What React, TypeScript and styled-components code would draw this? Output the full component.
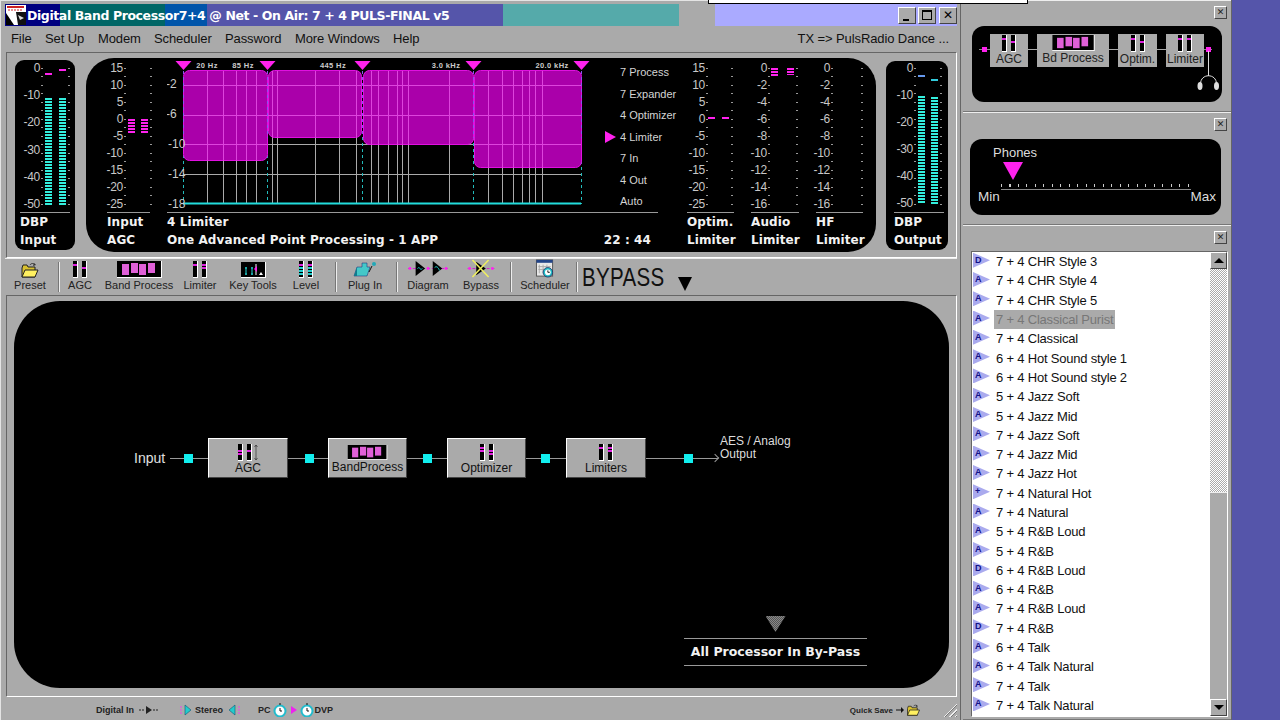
import React from 'react'
import styled, { createGlobalStyle, css } from 'styled-components'

const gray = '#aaaaaa'
const raised = css`
  border-top: 1px solid #fff;
  border-left: 1px solid #fff;
  border-right: 1px solid #444;
  border-bottom: 1px solid #444;
`
const sunken = css`
  border-top: 1px solid #666;
  border-left: 1px solid #666;
  border-right: 1px solid #fff;
  border-bottom: 1px solid #fff;
`
const displayFont = css`
  font-family: 'DejaVu Sans', sans-serif;
  font-weight: 700;
  color: #f2f2f2;
`

const GlobalStyle = createGlobalStyle`
  html, body {
    margin: 0;
    padding: 0;
    background: #5555aa;
    overflow: hidden;
  }
  * { box-sizing: border-box; }
`

type Seg = { top: number; h: number; color: string; striped?: boolean }
type MeterProps = { scale: string[]; scaleW: number; gap: number; lead?: number; bars: Seg[][] }

const inputScale = ['0', '-10', '-20', '-30', '-40', '-50']
const agcScale = ['15', '10', '5', '0', '-5', '-10', '-15', '-20', '-25']
const limitScale = ['0', '-2', '-4', '-6', '-8', '-10', '-12', '-14', '-16']
const mag = '#ff22ee'
const cyan = '#33eedd'

function Meter({ scale, scaleW, gap, lead = 2, bars }: MeterProps) {
  return (
    <MeterBody>
      <Scale $w={scaleW}>
        {scale.map((s) => (
          <span key={s}>{s}</span>
        ))}
      </Scale>
      <Ticks />
      <Tracks $gap={gap} $lead={lead}>
        {bars.map((segs, i) => {
          let end = 0
          return (
            <Track key={i}>
              {segs.map((s, j) => {
                const offset = s.top - end
                end = s.top + s.h
                return <Segment key={j} $top={offset} $h={s.h} $color={s.color} $striped={s.striped} />
              })}
            </Track>
          )
        })}
      </Tracks>
      <Ticks />
    </MeterBody>
  )
}

function Pair({ fills, arrow }: { fills: string[][]; arrow?: boolean }) {
  return (
    <svg width={arrow ? 20 : 14} height="17" viewBox={arrow ? '0 0 20 17' : '0 0 14 17'}>
      {[0, 9].map((x, i) => (
        <g key={x}>
          <rect x={x} y="0" width="5" height="17" fill="#000" />
          <rect x={x + 4} y="0" width="1" height="17" fill="#fff" />
          <rect x={x} y="16" width="5" height="1" fill="#fff" />
          {fills[i].map((f, k) => (
            <rect key={k} x={x} y={3 + k * 3} width="4" height="2" fill={f} />
          ))}
        </g>
      ))}
      {arrow && <path d="M18 1 V16 M16.5 3 L18 1 L19.5 3 M16.5 14 L18 16 L19.5 14" stroke="#333" strokeWidth="0.7" fill="none" />}
    </svg>
  )
}

function BandIcon({ width = 45, height = 17 }: { width?: number; height?: number }) {
  return (
    <svg width={width} height={height} viewBox="0 0 45 17">
      <rect width="45" height="17" fill="#fff" />
      <rect width="44" height="16" fill="#000" />
      {[5, 14, 22, 31].map((x, i) => (
        <rect key={x} x={x} y={i % 2 ? 2 : 3} width="7" height={i % 2 ? 10 : 11} fill="#e060d8" />
      ))}
    </svg>
  )
}

function Folder({ width = 18, height = 16 }: { width?: number; height?: number }) {
  return (
    <svg width={width} height={height} viewBox="0 0 18 16">
      <path d="M1 6 L1 15 L14 15 L14 5 L7 5 L6 3 L2 3 Z" fill="#d8c030" stroke="#222" />
      <path d="M1 15 L4 8 L17 8 L14 15 Z" fill="#fff060" stroke="#222" />
      <path d="M9 3 C10 1 13 1 14 3" fill="none" stroke="#333" />
      <path d="M13 1 L15 3 L12 4 Z" fill="#333" />
    </svg>
  )
}

function KeyToolsIcon() {
  return (
    <svg width="25" height="16" viewBox="0 0 25 16">
      <rect width="25" height="16" fill="#fff" />
      <rect width="24" height="15" fill="#000" />
      <path d="M5 5 V13 M4 6 H6 M4 12 H6" stroke="#22dddd" />
      <path d="M11 5 V13 M10 6 H12 M10 12 H12" stroke="#22dddd" />
      <path d="M15 2 V13" stroke="#fff" />
      <path d="M13 7 L16 4 L16 10 Z" fill="#ff22ee" />
      <path d="M18 13 H22 L20 10 Z" fill="#fff" />
    </svg>
  )
}

function PlugIcon() {
  return (
    <svg width="26" height="17" viewBox="0 0 26 17">
      <path d="M5 6 L10 6 L10 2 L15 2 L15 6 L18 6 L15 15 L2 15 Z" fill="#44c8c8" stroke="#127" strokeWidth="0.5" />
      <path d="M2 15 L5 6 L5 15 Z" fill="#117c8c" />
      <circle cx="22" cy="3" r="2" fill="#22a8b8" />
      <path d="M17 11 L20 5" stroke="#111" />
    </svg>
  )
}

function FlowIcon() {
  return (
    <svg width="44" height="20" viewBox="0 0 44 20">
      <path d="M1 10 H43" stroke="#cc22cc" strokeDasharray="3 2" />
      <circle cx="3" cy="10" r="1.5" fill="#ff22ee" />
      <circle cx="22" cy="10" r="1.5" fill="#ff22ee" />
      <circle cx="41" cy="10" r="1.5" fill="#ff22ee" />
      <path d="M9 2 L19 10 L9 18 Z" fill="#000" />
      <path d="M11 10 C13 7 14 13 16 10" stroke="#22dddd" fill="none" />
      <path d="M27 2 L37 10 L27 18 Z" fill="#000" />
      <path d="M29 9 C31 7 33 9 34 12" stroke="#22dddd" fill="none" />
    </svg>
  )
}

function BypassIcon() {
  return (
    <svg width="30" height="20" viewBox="0 0 30 20">
      <path d="M1 10 H29" stroke="#cc22cc" strokeDasharray="3 2" />
      <circle cx="3" cy="10" r="1.5" fill="#ff22ee" />
      <circle cx="27" cy="10" r="1.5" fill="#ff22ee" />
      <path d="M10 3 L20 10 L10 17 Z" fill="#000" />
      <path d="M6 1 L23 19 M23 1 L6 19" stroke="#f0f060" strokeWidth="1.6" />
    </svg>
  )
}

function SchedulerIcon() {
  return (
    <svg width="20" height="20" viewBox="0 0 20 20">
      <rect x="1" y="1" width="17" height="17" fill="#e8e8e8" stroke="#555" />
      <rect x="1" y="1" width="17" height="3" fill="#224488" />
      <path d="M4 6 V15 M8 6 V15 M12 6 V15 M3 8 H16 M3 11 H16" stroke="#aaa" />
      <circle cx="13" cy="14" r="5" fill="#22c0c8" stroke="#115" strokeWidth="0.7" />
      <circle cx="13" cy="14" r="3" fill="#fff" />
      <path d="M13 12 V14 H15" stroke="#111" fill="none" />
    </svg>
  )
}

function AppIcon() {
  return (
    <svg width="20" height="20" viewBox="0 0 20 20">
      <rect width="20" height="20" fill="#fff" />
      <rect x="1" y="1" width="17" height="2" fill="#c22" />
      <path d="M2 5 H16" stroke="#c22" strokeDasharray="2 1" />
      <path d="M0 8 L8 20 L0 20 Z" fill="#000" />
      <path d="M10 7 H20 V20 H12 Z" fill="#111" />
      <path d="M12 10 L18 13 L14 15 Z" fill="#ddd" />
    </svg>
  )
}

function RouteTail() {
  return (
    <TailSvg width="20" height="63" viewBox="0 0 20 63">
      <path d="M0 15.5 H8" stroke="#888" />
      <rect x="2" y="13" width="5" height="5" fill="#ff22ee" />
      <path d="M4.5 17 V42" stroke="#ddd" />
      <path d="M-3.5 50 C-3.5 39 12.5 39 12.5 50" fill="none" stroke="#ddd" />
      <ellipse cx="-4" cy="52" rx="2.5" ry="4" fill="#ddd" />
      <ellipse cx="12.5" cy="52" rx="2.5" ry="4" fill="#ddd" />
    </TailSvg>
  )
}

const bands = [
  { x: 183, w: 84, b: 160, v: [207, 223, 236, 246, 256] },
  { x: 268, w: 93, b: 137, v: [272, 277, 315, 339, 356] },
  { x: 363, w: 110, b: 144, v: [371, 378, 388, 397, 402, 408, 449] },
  { x: 474, w: 107, b: 167, v: [488, 502, 513, 522, 529, 535, 542] },
]
const hLines = [84, 114, 143, 173]
const markers = [183, 267, 362, 473, 581]
const freqs: [string, number][] = [
  ['20 Hz', 207],
  ['85 Hz', 243],
  ['445 Hz', 333],
  ['3.0 kHz', 446],
  ['20.0 kHz', 552],
]
const dbLabels: [string, number, number][] = [
  ['-2', 166, 87],
  ['-6', 166, 117],
  ['-10', 168, 147],
  ['-14', 168, 177],
  ['-18', 168, 207],
]

function BandChart() {
  return (
    <ChartSvg width="423" height="151" viewBox="167 58 423 151">
      {hLines.map((y) => (
        <line key={y} x1="183" x2="581" y1={y + 0.5} y2={y + 0.5} stroke="#aaa" />
      ))}
      {bands.map((b) =>
        b.v.map((x) => <line key={x} x1={x + 0.5} x2={x + 0.5} y1="70" y2="202" stroke="#aaa" />),
      )}
      {markers.map((x) => (
        <line key={x} x1={x + 0.5} x2={x + 0.5} y1="70" y2="203" stroke="#22bbbb" strokeDasharray="3 3" />
      ))}
      <rect x="183" y="201.5" width="398" height="2" fill="#22dddd" />
      {bands.map((b) => (
        <g key={b.x}>
          <rect x={b.x + 0.5} y="69.5" width={b.w} height={b.b - 70} rx="6" fill="#aa00aa" stroke="#e010e0" />
          {hLines
            .filter((y) => y < b.b - 3)
            .map((y) => (
              <line key={y} x1={b.x} x2={b.x + b.w} y1={y + 0.5} y2={y + 0.5} stroke="#dd44dd" />
            ))}
          {b.v.map((x) => (
            <line key={x} x1={x + 0.5} x2={x + 0.5} y1="70" y2={b.b} stroke="#dd44dd" />
          ))}
        </g>
      ))}
      {markers.map((x) => (
        <g key={x}>
          <line x1={x + 0.5} x2={x + 0.5} y1="70" y2="137" stroke="#8855ee" strokeDasharray="3 3" />
          <path d={`M${x - 7.5} 60 H${x + 8.5} L${x + 0.5} 69 Z`} fill="#ff22ee" />
        </g>
      ))}
      {freqs.map(([t, x]) => (
        <text key={t} x={x} y="67" textAnchor="middle" fontFamily="'Liberation Sans', sans-serif" fontWeight="700" fontSize="7.5" fill="#ccc" letterSpacing="0.4">
          {t}
        </text>
      ))}
      {dbLabels.map(([t, x, y]) => (
        <text key={t} x={x} y={y} fontFamily="'Liberation Sans', sans-serif" fontSize="12" fill="#ccc">
          {t}
        </text>
      ))}
    </ChartSvg>
  )
}

const chain = ['7 Process', '7 Expander', '4 Optimizer', '4 Limiter', '7 In', '4 Out', 'Auto']

const presets: [string, string][] = [
  ['D', '7 + 4 CHR Style 3'],
  ['A', '7 + 4 CHR Style 4'],
  ['A', '7 + 4 CHR Style 5'],
  ['A', '7 + 4 Classical Purist'],
  ['A', '7 + 4 Classical'],
  ['A', '6 + 4 Hot Sound style 1'],
  ['A', '6 + 4 Hot Sound style 2'],
  ['A', '5 + 4 Jazz Soft'],
  ['A', '5 + 4 Jazz Mid'],
  ['A', '7 + 4 Jazz Soft'],
  ['A', '7 + 4 Jazz Mid'],
  ['A', '7 + 4 Jazz Hot'],
  ['+', '7 + 4 Natural Hot'],
  ['A', '7 + 4 Natural'],
  ['A', '5 + 4 R&B Loud'],
  ['A', '5 + 4 R&B'],
  ['D', '6 + 4 R&B Loud'],
  ['A', '6 + 4 R&B'],
  ['A', '7 + 4 R&B Loud'],
  ['D', '7 + 4 R&B'],
  ['A', '6 + 4 Talk'],
  ['A', '6 + 4 Talk Natural'],
  ['A', '7 + 4 Talk'],
  ['A', '7 + 4 Talk Natural'],
]

const m = '#dd22dd'
const k = '#000'
const t = '#22cccc'

export default function App() {
  return (
    <>
      <GlobalStyle />
      <Page>
        <TopSliver />
        <MainWindow>
          <TitleBar>
            <AppIcon />
            <TitleText>Digital Band Processor7+4 @ Net - On Air: 7 + 4 PULS-FINAL v5</TitleText>
            <WindowButtons>
              <WinButton>
                <MinGlyph />
              </WinButton>
              <WinButton>
                <MaxGlyph />
              </WinButton>
              <CloseWinButton>✕</CloseWinButton>
            </WindowButtons>
          </TitleBar>

          <MenuBar>
            <MenuItem $w={34}>File</MenuItem>
            <MenuItem $w={53}>Set Up</MenuItem>
            <MenuItem $w={56}>Modem</MenuItem>
            <MenuItem $w={71}>Scheduler</MenuItem>
            <MenuItem $w={70}>Password</MenuItem>
            <MenuItem $w={98}>More Windows</MenuItem>
            <MenuItem $w={40}>Help</MenuItem>
            <TxLabel>TX =&gt; PulsRadio Dance ...</TxLabel>
          </MenuBar>

          <MeterFrame>
            <SidePanel $w={60} $h={190} $top={2} $left={5}>
              <Column $w={50}>
                <Meter
                  scale={inputScale}
                  scaleW={20}
                  gap={7}
                  bars={[
                    [
                      { top: 11, h: 2, color: mag },
                      { top: 36, h: 107, color: cyan, striped: true },
                    ],
                    [
                      { top: 7, h: 2, color: mag },
                      { top: 36, h: 107, color: cyan, striped: true },
                    ],
                  ]}
                />
                <Rule />
                <Caption>DBP</Caption>
                <Caption>Input</Caption>
              </Column>
            </SidePanel>

            <CenterPanel>
              <Column $w={43}>
                <Meter
                  scale={agcScale}
                  scaleW={16}
                  gap={6}
                  lead={2}
                  bars={[
                    [{ top: 57, h: 14, color: mag, striped: true }],
                    [{ top: 57, h: 14, color: mag, striped: true }],
                  ]}
                />
                <Rule />
                <Caption>Input</Caption>
                <Caption>AGC</Caption>
              </Column>

              <Column $w={491}>
                <ChartRow>
                  <BandChart />
                  <ChainList>
                    {chain.map((c) => (
                      <ChainRow key={c}>
                        {c === '4 Limiter' && <ChainMarker />}
                        {c}
                      </ChainRow>
                    ))}
                  </ChainList>
                </ChartRow>
                <Rule />
                <Caption>4 Limiter</Caption>
                <CaptionRow>
                  <Caption>One Advanced Point Processing - 1 APP</Caption>
                  <Clock>22 : 44</Clock>
                </CaptionRow>
              </Column>

              <Column $w={47} $left={12}>
                <Meter
                  scale={agcScale}
                  scaleW={18}
                  gap={7}
                  lead={0}
                  bars={[[{ top: 55, h: 2, color: mag }], [{ top: 55, h: 2, color: mag }]]}
                />
                <Rule />
                <Caption>Optim.</Caption>
                <Caption>Limiter</Caption>
              </Column>

              <Column $w={48}>
                <Meter
                  scale={limitScale}
                  scaleW={16}
                  gap={9}
                  lead={1}
                  bars={[
                    [{ top: 6, h: 9, color: mag, striped: true }],
                    [{ top: 6, h: 7, color: mag, striped: true }],
                  ]}
                />
                <Rule />
                <Caption>Audio</Caption>
                <Caption>Limiter</Caption>
              </Column>

              <Column $w={47}>
                <Meter scale={limitScale} scaleW={14} gap={11} lead={1} bars={[[], []]} />
                <Rule />
                <Caption>HF</Caption>
                <Caption>Limiter</Caption>
              </Column>
            </CenterPanel>

            <SidePanel $w={62} $h={189} $top={1} $left={8}>
              <Column $w={50}>
                <Meter
                  scale={inputScale}
                  scaleW={19}
                  gap={6}
                  bars={[
                    [
                      { top: 13, h: 2, color: '#6699ee' },
                      { top: 34, h: 108, color: cyan, striped: true },
                    ],
                    [
                      { top: 17, h: 2, color: '#33ccdd' },
                      { top: 35, h: 107, color: cyan, striped: true },
                    ],
                  ]}
                />
                <Rule />
                <Caption>DBP</Caption>
                <Caption>Output</Caption>
              </Column>
            </SidePanel>
          </MeterFrame>

          <Toolbar>
            <ToolButton $w={46}>
              <Folder />
              <ToolLabel>Preset</ToolLabel>
            </ToolButton>
            <ToolSep $l={5} $r={5} />
            <ToolButton $w={30}>
              <Pair fills={[[m, k, k], [k, m, k]]} />
              <ToolLabel>AGC</ToolLabel>
            </ToolButton>
            <ToolButton $w={88}>
              <BandIcon />
              <ToolLabel>Band Process</ToolLabel>
            </ToolButton>
            <ToolButton $w={34}>
              <Pair fills={[[m, k, k], [m, m, k]]} />
              <ToolLabel>Limiter</ToolLabel>
            </ToolButton>
            <ToolButton $w={72}>
              <KeyToolsIcon />
              <ToolLabel>Key Tools</ToolLabel>
            </ToolButton>
            <ToolButton $w={34}>
              <Pair fills={[[m, t, t, t], [m, t, t, t]]} />
              <ToolLabel>Level</ToolLabel>
            </ToolButton>
            <ToolSep $l={12} $r={12} />
            <ToolButton $w={32}>
              <PlugIcon />
              <ToolLabel>Plug In</ToolLabel>
            </ToolButton>
            <ToolSep $l={15} $r={6} />
            <ToolButton $w={48}>
              <FlowIcon />
              <ToolLabel>Diagram</ToolLabel>
            </ToolButton>
            <ToolButton $w={58}>
              <BypassIcon />
              <ToolLabel>Bypass</ToolLabel>
            </ToolButton>
            <ToolSep $l={0} $r={2} />
            <ToolButton $w={62}>
              <SchedulerIcon />
              <ToolLabel>Scheduler</ToolLabel>
            </ToolButton>
            <ToolSep $l={0} $r={4} />
            <BypassTitle>BYPASS</BypassTitle>
            <BypassArrow />
          </Toolbar>

          <DisplayFrame>
            <Display>
              <DiagramRow>
                <InputLabel>Input</InputLabel>
                <Wire $w={38}>
                  <Node $shift={-1} />
                </Wire>
                <Block $w={80}>
                  <Pair fills={[[k, m, m], [k, m, k]]} arrow />
                  <BlockLabel>AGC</BlockLabel>
                </Block>
                <Wire $w={40}>
                  <Node $shift={1} />
                </Wire>
                <Block $w={79}>
                  <BandIcon width={45} height={15} />
                  <BlockLabel>BandProcess</BlockLabel>
                </Block>
                <Wire $w={40}>
                  <Node />
                </Wire>
                <Block $w={79}>
                  <Pair fills={[[m, m, k], [k, m, m]]} />
                  <BlockLabel>Optimizer</BlockLabel>
                </Block>
                <Wire $w={40}>
                  <Node $shift={-1} />
                </Wire>
                <Block $w={80}>
                  <Pair fills={[[m, k, k], [m, m, k]]} />
                  <BlockLabel>Limiters</BlockLabel>
                </Block>
                <Wire $w={72}>
                  <Node $shift={6} />
                  <WireArrow />
                </Wire>
                <OutputLabel>
                  AES / Analog
                  <br />
                  Output
                </OutputLabel>
              </DiagramRow>
              <Notice>
                <NoticeArrow />
                <NoticeText>All Processor In By-Pass</NoticeText>
              </Notice>
            </Display>
          </DisplayFrame>

          <StatusBar>
            <StatusText $left={91}>Digital In</StatusText>
            <StatusGlyph $w={20} $left={5}>
              <svg width="20" height="8" viewBox="0 0 20 8">
                <path d="M0 4 H5 M14 4 H19" stroke="#222" strokeDasharray="2 1" />
                <path d="M7 0 L13 4 L7 8 Z" fill="#222" />
              </svg>
            </StatusGlyph>
            <StatusGlyph $w={12} $left={21}>
              <svg width="12" height="12" viewBox="0 0 12 12">
                <path d="M5 1 L11 6 L5 11 Z" fill="#22cccc" stroke="#157" strokeWidth="0.6" />
                <path d="M1 2 V10" stroke="#ee44ee" strokeDasharray="2 1" />
              </svg>
            </StatusGlyph>
            <StatusText $left={3}>Stereo</StatusText>
            <StatusGlyph $w={12} $left={5}>
              <svg width="12" height="12" viewBox="0 0 12 12">
                <path d="M7 1 L1 6 L7 11 Z" fill="#22cccc" stroke="#157" strokeWidth="0.6" />
                <path d="M11 2 V10" stroke="#ee44ee" strokeDasharray="2 1" />
              </svg>
            </StatusGlyph>
            <StatusText $left={18}>PC</StatusText>
            <StatusGlyph $w={14} $left={2}>
              <ClockGlyph />
            </StatusGlyph>
            <StatusGlyph $w={6} $left={4}>
              <svg width="6" height="8" viewBox="0 0 6 8">
                <path d="M0 0 L6 4 L0 8 Z" fill="#ee22ee" />
              </svg>
            </StatusGlyph>
            <StatusGlyph $w={14} $left={3}>
              <ClockGlyph />
            </StatusGlyph>
            <StatusText $left={1}>DVP</StatusText>
            <QuickSave>Quick Save</QuickSave>
            <StatusGlyph $w={8} $left={3}>
              <svg width="8" height="6" viewBox="0 0 8 6">
                <path d="M0 3 H6" stroke="#111" />
                <path d="M5 0 L8 3 L5 6 Z" fill="#111" />
              </svg>
            </StatusGlyph>
            <StatusGlyph $w={15} $left={2}>
              <Folder width={15} height={12} />
            </StatusGlyph>
            <Grip />
          </StatusBar>
        </MainWindow>

        <Dock>
          <DockPanel $h={112}>
            <PanelHeader>
              <SmallClose>✕</SmallClose>
            </PanelHeader>
            <RouteBox>
              <RouteLead />
              <RouteNode $w={38}>
                <Pair fills={[[m, k, k], [k, m, k]]} />
                <RouteLabel>AGC</RouteLabel>
              </RouteNode>
              <RouteLink />
              <RouteNode $w={72}>
                <BandIcon width={45} height={16} />
                <RouteLabel>Bd Process</RouteLabel>
              </RouteNode>
              <RouteLink />
              <RouteNode $w={39}>
                <Pair fills={[[m, k, k], [k, m, k]]} />
                <RouteLabel>Optim.</RouteLabel>
              </RouteNode>
              <RouteLink />
              <RouteNode $w={38}>
                <Pair fills={[[m, k, k], [m, k, k]]} />
                <RouteLabel>Limiter</RouteLabel>
              </RouteNode>
              <RouteTail />
            </RouteBox>
          </DockPanel>

          <DockPanel $h={113}>
            <PanelHeader>
              <SmallClose>✕</SmallClose>
            </PanelHeader>
            <PhonesBox>
              <PhonesLabel>Phones</PhonesLabel>
              <PhonesPointer />
              <PhonesRuler />
              <PhonesEnds>
                <span>Min</span>
                <span>Max</span>
              </PhonesEnds>
            </PhonesBox>
          </DockPanel>

          <DockPanel>
            <PanelHeader>
              <SmallClose>✕</SmallClose>
            </PanelHeader>
            <ListBox>
              <ListRows>
                {presets.map(([letter, name]) => (
                  <ListRow key={name}>
                    <Pennant>{letter}</Pennant>
                    <RowName $selected={name === '7 + 4 Classical Purist'}>{name}</RowName>
                  </ListRow>
                ))}
              </ListRows>
              <ScrollBar>
                <ScrollButton>
                  <UpTriangle />
                </ScrollButton>
                <ScrollTrack>
                  <ScrollThumb />
                </ScrollTrack>
                <ScrollButton>
                  <DownTriangle />
                </ScrollButton>
              </ScrollBar>
            </ListBox>
          </DockPanel>
        </Dock>
      </Page>
    </>
  )
}

function ClockGlyph() {
  return (
    <svg width="14" height="14" viewBox="0 0 14 14">
      <circle cx="7" cy="8" r="5.5" fill="#fff" stroke="#22bbcc" strokeWidth="2" />
      <path d="M7 5 V8 H9" stroke="#111" fill="none" />
      <path d="M6 1 H8" stroke="#111" />
    </svg>
  )
}

const Page = styled.div`
  width: 1280px;
  height: 720px;
  display: flex;
  background: #5555aa;
  position: relative;
  overflow: hidden;
  font-family: 'Liberation Sans', Arial, sans-serif;
`

const TopSliver = styled.div`
  position: absolute;
  left: 708px;
  top: -4px;
  width: 320px;
  height: 8px;
  background: #fff;
  border: 1px solid #000;
`

const MainWindow = styled.div`
  width: 960px;
  height: 720px;
  padding: 4px 3px 0 5px;
  background: ${gray};
  display: flex;
  flex-direction: column;
  box-shadow: inset 1px 1px 0 #e4e4e4;
`

const TitleBar = styled.div`
  height: 22px;
  flex: none;
  display: flex;
  align-items: center;
  padding-left: 1px;
  background: linear-gradient(
    to right,
    #000080 0 55px,
    #006666 55px 160px,
    #0055aa 160px 202px,
    #5555aa 202px 498px,
    #55aaaa 498px 674px,
    #aaaaaa 674px 710px,
    #aaaaff 710px
  );
`

const TitleText = styled.div`
  margin-left: 1px;
  font-family: 'DejaVu Sans', sans-serif;
  font-weight: 700;
  font-size: 12.5px;
  letter-spacing: -0.4px;
  color: #fff;
  white-space: nowrap;
`

const WindowButtons = styled.div`
  margin-left: auto;
  margin-right: 0;
  display: flex;
  gap: 2px;
`

const WinButton = styled.div`
  width: 18px;
  height: 17px;
  background: ${gray};
  ${raised};
  position: relative;
`

const CloseWinButton = styled(WinButton)`
  margin-left: 1px;
  font-size: 12px;
  line-height: 15px;
  text-align: center;
  color: #000;
  font-family: 'DejaVu Sans', sans-serif;
`

const MinGlyph = styled.div`
  position: absolute;
  left: 4px;
  bottom: 2px;
  width: 6px;
  height: 2px;
  background: #000;
`

const MaxGlyph = styled.div`
  position: absolute;
  left: 3px;
  top: 2px;
  width: 10px;
  height: 10px;
  border: 1px solid #000;
  border-top-width: 2px;
`

const MenuBar = styled.div`
  height: 26px;
  flex: none;
  display: flex;
  align-items: center;
  padding: 0 0 2px 6px;
  font-size: 13px;
  letter-spacing: -0.1px;
  color: #111;
`

const MenuItem = styled.div<{ $w: number }>`
  width: ${(p) => p.$w}px;
  flex: none;
  white-space: nowrap;
`

const TxLabel = styled.div`
  margin-left: auto;
  margin-right: 8px;
  white-space: nowrap;
`

const MeterFrame = styled.div`
  margin-left: 1px;
  height: 206px;
  flex: none;
  display: flex;
  align-items: center;
  gap: 10px;
  padding-left: 8px;
  ${sunken};
`

const SidePanel = styled.div<{ $w: number; $h: number; $top: number; $left: number }>`
  width: ${(p) => p.$w}px;
  height: ${(p) => p.$h}px;
  flex: none;
  background: #000;
  border-radius: 9px;
  padding: ${(p) => p.$top}px 0 0 ${(p) => p.$left}px;
  &:first-child {
    margin-right: 1px;
  }
`

const CenterPanel = styled.div`
  width: 790px;
  height: 194px;
  flex: none;
  background: #000;
  border-radius: 28px;
  display: flex;
  gap: 17px;
  padding: 4px 0 0 21px;
`

const Column = styled.div<{ $w: number; $left?: number }>`
  width: ${(p) => p.$w}px;
  flex: none;
  margin-left: ${(p) => p.$left ?? 0}px;
`

const Rule = styled.div`
  height: 1px;
  margin-top: 2px;
  background: #999;
`

const Caption = styled.div`
  ${displayFont};
  height: 18px;
  line-height: 18px;
  font-size: 12px;
  white-space: nowrap;
  letter-spacing: 0.1px;
`

const CaptionRow = styled.div`
  display: flex;
  justify-content: space-between;
  padding-right: 7px;
`

const Clock = styled(Caption)`
  font-size: 12px;
`

const MeterBody = styled.div`
  height: 148px;
  display: flex;
  align-items: flex-start;
`

const Scale = styled.div<{ $w: number }>`
  width: ${(p) => p.$w}px;
  height: 148px;
  flex: none;
  display: flex;
  flex-direction: column;
  justify-content: space-between;
  align-items: flex-end;
  font-size: 12px;
  line-height: 12px;
  color: #c8c8c8;
  letter-spacing: -0.3px;
`

const Ticks = styled.div`
  width: 2px;
  height: 137px;
  margin: 6px 0 0 1px;
  flex: none;
  background: repeating-linear-gradient(to bottom, #999 0 1px, transparent 1px 8.5px);
`

const Tracks = styled.div<{ $gap: number; $lead: number }>`
  display: flex;
  gap: ${(p) => p.$gap}px;
  margin-left: ${(p) => p.$lead}px;
  margin-right: 1px;
`

const Track = styled.div`
  width: 7px;
  height: 148px;
  display: flex;
  flex-direction: column;
`

const Segment = styled.div<{ $top: number; $h: number; $color: string; $striped?: boolean }>`
  margin-top: ${(p) => p.$top}px;
  height: ${(p) => p.$h}px;
  flex: none;
  background: ${(p) =>
    p.$striped
      ? `repeating-linear-gradient(to bottom, ${p.$color} 0 2px, transparent 2px 3px)`
      : p.$color};
`

const ChartRow = styled.div`
  height: 148px;
  display: flex;
`

const ChartSvg = styled.svg`
  flex: none;
  margin-top: -3px;
`

const ChainList = styled.div`
  margin-left: 30px;
  font-size: 11px;
  color: #d4d4d4;
`

const ChainRow = styled.div`
  height: 21.5px;
  line-height: 21.5px;
  white-space: nowrap;
  display: flex;
  align-items: center;
`

const ChainMarker = styled.span`
  width: 0;
  height: 0;
  margin-left: -15px;
  margin-right: 4px;
  border-left: 11px solid #ff22ee;
  border-top: 6px solid transparent;
  border-bottom: 6px solid transparent;
`

const Toolbar = styled.div`
  height: 37px;
  flex: none;
  display: flex;
  align-items: flex-start;
  padding-left: 2px;
  margin-top: 0;
  border-top: 1px solid #eee;
`

const ToolButton = styled.div<{ $w: number }>`
  width: ${(p) => p.$w}px;
  height: 33px;
  flex: none;
  display: flex;
  flex-direction: column;
  align-items: center;
  justify-content: flex-end;
  gap: 1px;
`

const ToolLabel = styled.span`
  font-size: 11px;
  line-height: 13px;
  color: #222;
  white-space: nowrap;
`

const ToolSep = styled.div<{ $l: number; $r: number }>`
  width: 2px;
  height: 30px;
  flex: none;
  margin: 3px ${(p) => p.$r}px 0 ${(p) => p.$l}px;
  border-left: 1px solid #777;
  border-right: 1px solid #eee;
`

const BypassTitle = styled.div`
  margin: 3px -18px 0 0;
  font-size: 25px;
  line-height: 30px;
  letter-spacing: 0.4px;
  color: #111;
  transform: scaleX(0.82);
  transform-origin: left center;
`

const BypassArrow = styled.div`
  width: 0;
  height: 0;
  margin: 18px 0 0 13px;
  border-top: 14px solid #000;
  border-left: 7px solid transparent;
  border-right: 7px solid transparent;
`

const DisplayFrame = styled.div`
  margin-left: 1px;
  height: 402px;
  flex: none;
  padding: 5px 7px 8px 7px;
  ${sunken};
`

const Display = styled.div`
  height: 100%;
  background: #000;
  border-radius: 46px;
  display: flex;
  flex-direction: column;
`

const DiagramRow = styled.div`
  display: flex;
  align-items: center;
  height: 40px;
  margin-top: 137px;
  padding-left: 120px;
`

const InputLabel = styled.div`
  width: 36px;
  color: #e0e0e0;
  font-size: 14px;
`

const Wire = styled.div<{ $w: number }>`
  width: ${(p) => p.$w}px;
  height: 1px;
  flex: none;
  background: #999;
  display: flex;
  align-items: center;
  justify-content: center;
  position: relative;
`

const Node = styled.div<{ $shift?: number }>`
  width: 9px;
  height: 9px;
  flex: none;
  background: #11eeee;
  margin-left: ${(p) => (p.$shift ?? 0) * 2}px;
`

const WireArrow = styled.div`
  position: absolute;
  right: 0;
  top: -3px;
  width: 6px;
  height: 6px;
  border-top: 1px solid #999;
  border-right: 1px solid #999;
  transform: rotate(45deg);
`

const Block = styled.div<{ $w: number }>`
  width: ${(p) => p.$w}px;
  height: 40px;
  flex: none;
  background: ${gray};
  ${raised};
  display: flex;
  flex-direction: column;
  align-items: center;
  justify-content: center;
  padding-top: 2px;
`

const BlockLabel = styled.span`
  font-size: 12px;
  line-height: 14px;
  color: #111;
  white-space: nowrap;
`

const OutputLabel = styled.div`
  margin-left: 2px;
  margin-top: -21px;
  color: #ddd;
  font-size: 12px;
  line-height: 13px;
  white-space: nowrap;
`

const Notice = styled.div`
  margin-top: auto;
  margin-bottom: 22px;
  margin-right: 82px;
  align-self: flex-end;
  width: 183px;
  display: flex;
  flex-direction: column;
  align-items: center;
`

const NoticeArrow = styled.div`
  width: 20px;
  height: 16px;
  margin-bottom: 6px;
  background: repeating-conic-gradient(#888 0 25%, #555 0 50%) 0 0 / 2px 2px;
  clip-path: polygon(0 0, 100% 0, 50% 100%);
`

const NoticeText = styled.div`
  ${displayFont};
  width: 100%;
  height: 28px;
  line-height: 26px;
  text-align: center;
  font-size: 12.5px;
  border-top: 1px solid #999;
  border-bottom: 1px solid #999;
  white-space: nowrap;
`

const StatusBar = styled.div`
  flex: 1;
  display: flex;
  align-items: center;
  padding-top: 3px;
`

const StatusText = styled.div<{ $left: number }>`
  margin-left: ${(p) => p.$left}px;
  font-size: 9px;
  font-weight: 700;
  color: #222;
  white-space: nowrap;
`

const StatusGlyph = styled.div<{ $w: number; $left: number }>`
  width: ${(p) => p.$w}px;
  margin-left: ${(p) => p.$left}px;
  flex: none;
  display: flex;
  align-items: center;
`

const QuickSave = styled.div`
  margin-left: auto;
  font-size: 8px;
  font-weight: 700;
  color: #222;
  white-space: nowrap;
`

const Grip = styled.div`
  width: 14px;
  height: 14px;
  margin-left: 22px;
  flex: none;
  background: repeating-linear-gradient(135deg, ${gray} 0 2px, #eee 2px 3px, #777 3px 4px);
  clip-path: polygon(100% 0, 100% 100%, 0 100%);
`

const Dock = styled.div`
  width: 272px;
  height: 720px;
  flex: none;
  background: ${gray};
  padding-left: 2px;
  border-right: 1px solid #666;
  border-left: 1px solid #666;
  display: flex;
  flex-direction: column;
`

const DockPanel = styled.div<{ $h?: number }>`
  ${(p) => (p.$h ? `height: ${p.$h}px; flex: none;` : 'flex: 1; min-height: 0;')}
  border-top: 1px solid #eee;
  border-bottom: 1px solid #777;
  display: flex;
  flex-direction: column;
`

const PanelHeader = styled.div`
  height: 25px;
  flex: none;
  display: flex;
  justify-content: flex-end;
  padding: 5px 4px 0 0;
`

const SmallClose = styled.div`
  width: 13px;
  height: 13px;
  background: ${gray};
  ${raised};
  font-size: 9px;
  line-height: 11px;
  text-align: center;
  color: #222;
  font-family: 'DejaVu Sans', sans-serif;
`

const RouteBox = styled.div`
  width: 250px;
  height: 76px;
  margin-left: 9px;
  background: #000;
  border-radius: 12px;
  display: flex;
  align-items: flex-start;
  padding: 8px 0 0 7px;
`

const RouteLead = styled.div`
  width: 11px;
  height: 5px;
  margin-top: 13px;
  flex: none;
  background:
    linear-gradient(#ff22ee, #ff22ee) 3px 0 / 5px 5px no-repeat,
    linear-gradient(#888, #888) 0 2px / 100% 1px no-repeat;
`

const RouteNode = styled.div<{ $w: number }>`
  width: ${(p) => p.$w}px;
  height: 33px;
  flex: none;
  background: ${gray};
  display: flex;
  flex-direction: column;
  align-items: center;
  padding-top: 1px;
`

const RouteLabel = styled.span`
  font-size: 12px;
  line-height: 14px;
  color: #222;
  white-space: nowrap;
`

const RouteLink = styled.div`
  width: 9px;
  height: 1px;
  margin-top: 15px;
  flex: none;
  background: #aaa;
`

const TailSvg = styled.svg`
  flex: none;
  overflow: visible;
`

const PhonesBox = styled.div`
  width: 251px;
  height: 76px;
  margin-left: 7px;
  margin-top: 1px;
  background: #000;
  border-radius: 12px;
  padding-top: 7px;
  display: flex;
  flex-direction: column;
`

const PhonesLabel = styled.div`
  margin-left: 23px;
  height: 14px;
  line-height: 14px;
  font-size: 13px;
  color: #ddd;
`

const PhonesPointer = styled.div`
  width: 0;
  height: 0;
  margin: 2px 0 0 33px;
  border-top: 18px solid #ff22ee;
  border-left: 10px solid transparent;
  border-right: 10px solid transparent;
`

const PhonesRuler = styled.div`
  width: 190px;
  height: 6px;
  margin: 4px 0 0 31px;
  flex: none;
  background: repeating-linear-gradient(to right, #ccc 0 1px, transparent 1px 8.5px) 0 0 / 100% 3px no-repeat;
  border-bottom: 1px solid #888;
`

const PhonesEnds = styled.div`
  display: flex;
  justify-content: space-between;
  padding: 0 5px 0 8px;
  font-size: 13.5px;
  line-height: 14px;
  color: #ddd;
`

const ListBox = styled.div`
  width: 257px;
  height: 466px;
  margin-left: 8px;
  flex: none;
  display: flex;
  background: #fff;
  ${sunken};
`

const ListRows = styled.div`
  flex: 1;
  min-width: 0;
  overflow: hidden;
  padding-left: 1px;
`

const ListRow = styled.div`
  height: 19.3px;
  display: flex;
  align-items: center;
`

const Pennant = styled.span`
  width: 17px;
  height: 15px;
  flex: none;
  margin-top: -3px;
  padding-left: 2px;
  background: #aaaaee;
  clip-path: polygon(0 0, 100% 50%, 0 100%);
  font-size: 9px;
  font-weight: 700;
  line-height: 14px;
  color: #111188;
`

const RowName = styled.span<{ $selected?: boolean }>`
  margin-left: 4px;
  padding: 0 2px;
  height: 19px;
  line-height: 19px;
  font-size: 13px;
  letter-spacing: -0.2px;
  white-space: nowrap;
  color: ${(p) => (p.$selected ? '#777' : '#111')};
  background: ${(p) => (p.$selected ? gray : 'transparent')};
`

const ScrollBar = styled.div`
  width: 17px;
  flex: none;
  display: flex;
  flex-direction: column;
`

const ScrollButton = styled.div`
  height: 17px;
  flex: none;
  background: ${gray};
  ${raised};
  display: flex;
  align-items: center;
  justify-content: center;
`

const UpTriangle = styled.div`
  width: 0;
  height: 0;
  border-bottom: 5px solid #000;
  border-left: 5px solid transparent;
  border-right: 5px solid transparent;
`

const DownTriangle = styled.div`
  width: 0;
  height: 0;
  border-top: 5px solid #000;
  border-left: 5px solid transparent;
  border-right: 5px solid transparent;
`

const ScrollTrack = styled.div`
  flex: 1;
  display: flex;
  flex-direction: column;
  background: repeating-conic-gradient(#fff 0 25%, #aaa 0 50%) 0 0 / 2px 2px;
`

const ScrollThumb = styled.div`
  margin-top: auto;
  height: 207px;
  background: ${gray};
  border-top: 1px solid #eee;
`
